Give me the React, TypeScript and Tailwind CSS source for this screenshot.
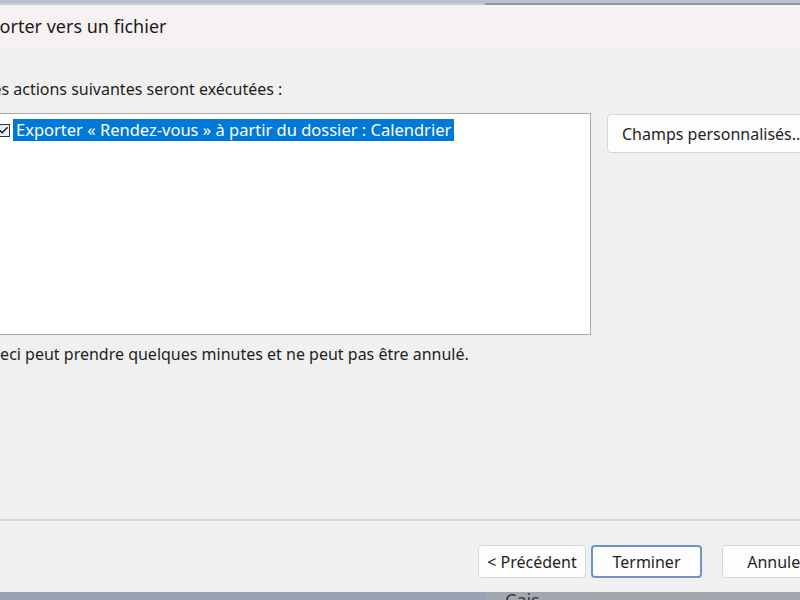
import { Check } from "lucide-react";

const font = { fontFamily: '"Noto Sans", "Open Sans", sans-serif' };

function DlgButton({ label, focused, className }: { label: string; focused?: boolean; className?: string }) {
  return (
    <button
      className={`h-[33px] rounded-[4px] bg-[#fdfdfd] text-[16px] text-[#1f1f1f] whitespace-nowrap ${
        focused ? "border-2 border-[#6f93c2]" : "border border-[#d6d6d6]"
      } ${className ?? ""}`}
    >
      {label}
    </button>
  );
}

export default function App() {
  return (
    <div className="w-[800px] h-[600px] overflow-hidden flex flex-col bg-[#f0f0f0]" style={font}>
      {/* desktop edge above the dialog */}
      <div className="h-[3px] bg-[#b8c2d0]" />
      <div className="h-[2px] flex">
        <div className="w-[485px] bg-[#c4ccd8]" />
        <div className="flex-1 bg-[#8b96a6]" />
      </div>

      {/* title bar */}
      <div className="h-[43px] bg-[#f6f2f2] flex items-center">
        <span className="-ml-[31px] text-[18px] text-[#1a1a1a] whitespace-nowrap">Exporter vers un fichier</span>
      </div>

      {/* body */}
      <div className="flex-1 flex flex-col">
        <p className="-ml-[16px] mt-[30px] text-[16px] text-[#1e1e1e] whitespace-nowrap leading-[22px]">
          Les actions suivantes seront exécutées :
        </p>

        <div className="flex items-start mt-[13px]">
          <div className="-ml-[16px] w-[607px] h-[222px] shrink-0 bg-white border border-[#a8a8a8] pt-[5px]">
            <div className="flex items-center pl-[12px]">
              <span className="w-[13px] h-[13px] border border-[#333] bg-[#e8eef6] flex items-center justify-center">
                <Check className="w-[11px] h-[11px] text-[#1a1a1a]" strokeWidth={3} />
              </span>
              <span className="ml-[3px] h-[22px] flex items-center bg-[#0078d7] text-white text-[16.5px] px-[3px] whitespace-nowrap">
                Exporter « Rendez-vous » à partir du dossier : Calendrier
              </span>
            </div>
          </div>
          <button className="ml-[16px] mt-[1px] h-[39px] w-[210px] shrink-0 rounded-[4px] bg-[#fdfdfd] border border-[#d6d6d6] text-[16px] text-[#1f1f1f] text-left pl-[14px] whitespace-nowrap">
            Champs personnalisés...
          </button>
        </div>

        <p className="-ml-[10px] mt-[8px] text-[16px] text-[#1e1e1e] whitespace-nowrap leading-[22px]">
          Ceci peut prendre quelques minutes et ne peut pas être annulé.
        </p>

        <div className="flex-1" />

        {/* separator */}
        <div className="h-[2px] bg-[#d5d5d5]" />
        <div className="h-[1px] bg-[#fafafa]" />

        {/* footer buttons */}
        <div className="flex items-start mt-[23px] h-[47px]">
          <div className="w-[478px] shrink-0" />
          <DlgButton label="< Précédent" className="w-[108px] shrink-0" />
          <DlgButton label="Terminer" focused className="ml-[5px] w-[111px] shrink-0" />
          <DlgButton label="Annuler" className="ml-[20px] w-[110px] shrink-0" />
        </div>
      </div>

      {/* window behind, along the bottom edge */}
      <div className="h-[8px] flex overflow-hidden">
        <div className="w-[485px] bg-[#9aa3b3]" />
        <div className="flex-1 bg-[#a3a7af] relative overflow-hidden">
          <span className="absolute left-[20px] top-[-2px] text-[18px] leading-[20px] text-[#3a3a3a]">Cais</span>
        </div>
      </div>
    </div>
  );
}
